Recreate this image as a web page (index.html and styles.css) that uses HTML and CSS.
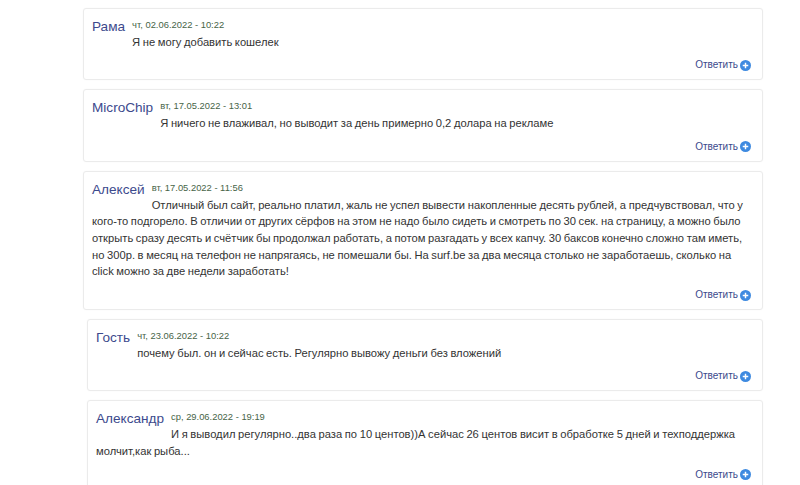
FILE: index.html
```html
<!DOCTYPE html>
<html lang="ru">
<head>
<meta charset="utf-8">
<title>Комментарии</title>
<link rel="stylesheet" href="styles.css">
</head>
<body>
<div class="comments">
  <div class="card">
    <span class="name">Рама</span>
    <div class="date">чт, 02.06.2022 - 10:22</div>
    <div class="text">Я не могу добавить кошелек</div>
    <div class="reply"><a class="reply-link">Ответить<svg class="plus" viewBox="0 0 12 12"><circle cx="6" cy="6" r="6" fill="#3e8ae0"/><path d="M6 3v6M3 6h6" stroke="#fff" stroke-width="1.6"/></svg></a></div>
  </div>
  <div class="card">
    <span class="name">MicroChip</span>
    <div class="date">вт, 17.05.2022 - 13:01</div>
    <div class="text">Я ничего не влаживал, но выводит за день примерно 0,2 долара на рекламе</div>
    <div class="reply"><a class="reply-link">Ответить<svg class="plus" viewBox="0 0 12 12"><circle cx="6" cy="6" r="6" fill="#3e8ae0"/><path d="M6 3v6M3 6h6" stroke="#fff" stroke-width="1.6"/></svg></a></div>
  </div>
  <div class="card">
    <span class="name">Алексей</span>
    <div class="date">вт, 17.05.2022 - 11:56</div>
    <div class="text">Отличный был сайт, реально платил, жаль не успел вывести накопленные десять рублей, а предчувствовал, что у<br>кого-то подгорело. В отличии от других сёрфов на этом не надо было сидеть и смотреть по 30 сек. на страницу, а можно было<br>открыть сразу десять и счётчик бы продолжал работать, а потом разгадать у всех капчу. 30 баксов конечно сложно там иметь,<br>но 300р. в месяц на телефон не напрягаясь, не помешали бы. На surf.be за два месяца столько не заработаешь, сколько на<br>click можно за две недели заработать!</div>
    <div class="reply"><a class="reply-link">Ответить<svg class="plus" viewBox="0 0 12 12"><circle cx="6" cy="6" r="6" fill="#3e8ae0"/><path d="M6 3v6M3 6h6" stroke="#fff" stroke-width="1.6"/></svg></a></div>
  </div>
  <div class="replies">
    <div class="card">
      <span class="name">Гость</span>
      <div class="date">чт, 23.06.2022 - 10:22</div>
      <div class="text">почему был. он и сейчас есть. Регулярно вывожу деньги без вложений</div>
      <div class="reply"><a class="reply-link">Ответить<svg class="plus" viewBox="0 0 12 12"><circle cx="6" cy="6" r="6" fill="#3e8ae0"/><path d="M6 3v6M3 6h6" stroke="#fff" stroke-width="1.6"/></svg></a></div>
    </div>
    <div class="card">
      <span class="name">Александр</span>
      <div class="date">ср, 29.06.2022 - 19:19</div>
      <div class="text">И я выводил регулярно..два раза по 10 центов))А сейчас 26 центов висит в обработке 5 дней и техподдержка<br>молчит,как рыба...</div>
      <div class="reply"><a class="reply-link">Ответить<svg class="plus" viewBox="0 0 12 12"><circle cx="6" cy="6" r="6" fill="#3e8ae0"/><path d="M6 3v6M3 6h6" stroke="#fff" stroke-width="1.6"/></svg></a></div>
    </div>
  </div>
</div>
</body>
</html>
```
FILE: styles.css
```css
html, body {
  margin: 0;
  padding: 0;
  background: #ffffff;
}
body {
  font-family: "Liberation Sans", Arial, sans-serif;
  color: #333333;
}
.comments {
  width: 680px;
  margin-left: 83px;
  padding-top: 8px;
}
.replies {
  margin-left: 4px;
}
.card {
  background: #ffffff;
  border: 1px solid #ebebeb;
  border-radius: 3px;
  box-shadow: 0 0 2px rgba(0, 0, 0, 0.03);
  padding: 8px 8px 6px 8px;
  margin-bottom: 9px;
}
.card::after {
  content: "";
  display: block;
  clear: both;
}
.name {
  float: left;
  font-size: 13.6px;
  line-height: 19px;
  height: 31px;
  margin-right: 7px;
  color: #3d4a8d;
}
.date {
  font-size: 9.4px;
  line-height: 16.7px;
  color: #476447;
}
.text {
  font-size: 11.2px;
  line-height: 16.7px;
  word-spacing: -0.5px;
  margin-right: -4px;
  color: #333333;
}
.reply {
  clear: both;
  display: flex;
  justify-content: flex-end;
  height: 16px;
  margin-top: 7px;
  margin-right: 3px;
  font-size: 10px;
  line-height: 16px;
}
.reply-link {
  display: flex;
  align-items: center;
  color: #3b4a8c;
  cursor: pointer;
}
.plus {
  display: block;
  width: 11px;
  height: 11px;
  margin-left: 2px;
}
```
